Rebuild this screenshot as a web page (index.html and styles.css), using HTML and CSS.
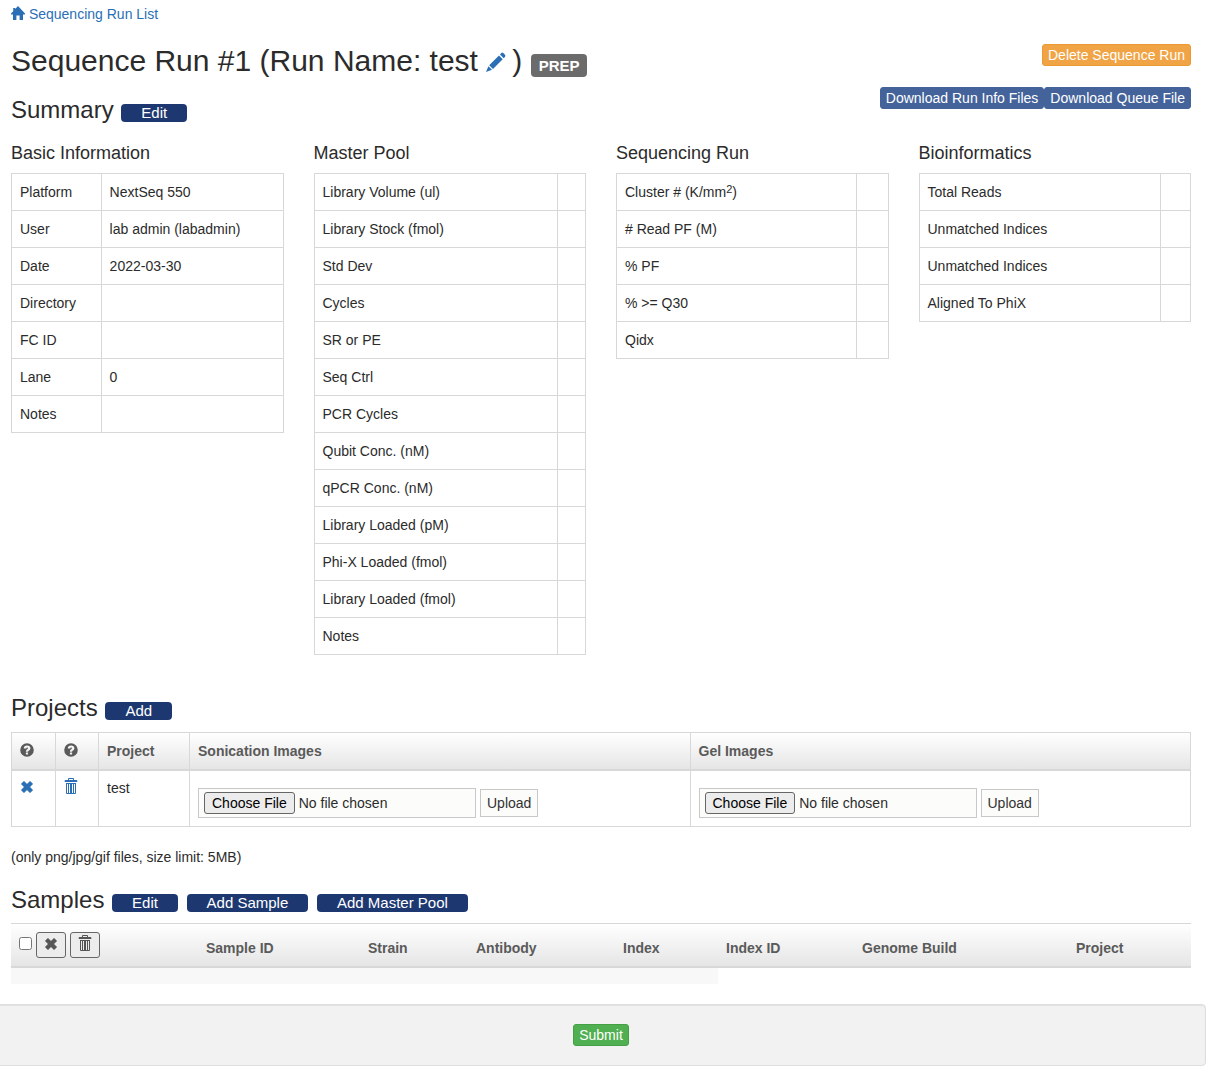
FILE: index.html
```html
<!DOCTYPE html>
<html lang="en">
<head>
<meta charset="utf-8">
<title>Sequence Run #1</title>
<link rel="stylesheet" href="styles.css">
</head>
<body>
<svg class="sprite" aria-hidden="true">
  <symbol id="home" viewBox="0 0 14 14"><path d="M7 0 L14 7.6 V8.4 H12 V14 H8.6 V9.4 H5.4 V14 H2 V8.4 H0 V7.6 L2.2 5.2 V2 H4.2 V3Z"/></symbol>
  <symbol id="pencil" viewBox="0 0 20 20"><path d="M15.2 1.2 Q16.2 0 17.3 1.1 L19 2.8 Q20 4 18.9 5 L17.7 6.2 L14 2.4Z M13 3.4 L16.7 7.2 L7 17 L3.2 13.2Z M2.4 14.2 L6 17.8 L0 20Z"/></symbol>
  <symbol id="question" viewBox="0 0 14 14"><path fill-rule="evenodd" d="M7 .2a6.8 6.8 0 1 0 0 13.6A6.8 6.8 0 0 0 7 .2Z M5.9 9.5h2.2v2H5.9Z M3.8 5.5C3.8 3.5 5 2.4 7.1 2.4c2 0 3.3 1 3.3 2.8 0 1.3-.7 1.8-1.4 2.3-.6.4-.9.6-.9 1.2H5.9c0-1.400.5-1.900 1.300-2.500.5-.4.9-.6.9-1.100 0-.4-.3-.7-.9-.7s-.9.4-.9 1.100Z"/></symbol>
  <symbol id="remove" viewBox="0 0 12 12"><path d="M2.900.3 6 3.300 9.100.3 11.700 2.900 8.700 6l3 3.100-2.600 2.600L6 8.700l-3.100 3L.3 9.100 3.300 6l-3-3.100Z" stroke="currentColor" stroke-width=".6"/></symbol>
  <symbol id="trash" viewBox="0 0 14 16"><path fill-rule="evenodd" d="M4 2V1Q4 0 5 0h4q1 0 1 1v1h2.500q.8 0 .8.800V4H.7V2.800Q.7 2 1.500 2Z M5 2h4V1H5Z M2 5h10v10q0 1-1 1H3q-1 0-1-1Z M3 6v9h1V6Z M5 6v9h1V6Z M8 6v9h1V6Z M10 6v9h1V6Z"/></symbol>
</svg>

<nav><a href="#"><svg class="icon-home"><use href="#home"/></svg> Sequencing Run List</a></nav>

<header class="page-head">
  <div class="titles">
    <h1>Sequence Run #1 (Run Name: test <a href="#" aria-label="Edit run name"><svg class="icon-pencil"><use href="#pencil"/></svg></a>&thinsp;) <span class="status">PREP</span></h1>
    <h2>Summary <button class="action">Edit</button></h2>
  </div>
  <div class="tools">
    <button class="btn btn-warning">Delete Sequence Run</button>
    <div class="downloads"><button class="btn btn-download">Download Run Info Files</button><button class="btn btn-download">Download Queue File</button></div>
  </div>
</header>

<main>
  <section class="summary">
    <div>
      <h3>Basic Information</h3>
      <table class="grid basic">
        <tr><td>Platform</td><td>NextSeq 550</td></tr>
        <tr><td>User</td><td>lab admin (labadmin)</td></tr>
        <tr><td>Date</td><td>2022-03-30</td></tr>
        <tr><td>Directory</td><td></td></tr>
        <tr><td>FC ID</td><td></td></tr>
        <tr><td>Lane</td><td>0</td></tr>
        <tr><td>Notes</td><td></td></tr>
      </table>
    </div>
    <div>
      <h3>Master Pool</h3>
      <table class="grid pool">
        <tr><td>Library Volume (ul)</td><td></td></tr>
        <tr><td>Library Stock (fmol)</td><td></td></tr>
        <tr><td>Std Dev</td><td></td></tr>
        <tr><td>Cycles</td><td></td></tr>
        <tr><td>SR or PE</td><td></td></tr>
        <tr><td>Seq Ctrl</td><td></td></tr>
        <tr><td>PCR Cycles</td><td></td></tr>
        <tr><td>Qubit Conc. (nM)</td><td></td></tr>
        <tr><td>qPCR Conc. (nM)</td><td></td></tr>
        <tr><td>Library Loaded (pM)</td><td></td></tr>
        <tr><td>Phi-X Loaded (fmol)</td><td></td></tr>
        <tr><td>Library Loaded (fmol)</td><td></td></tr>
        <tr><td>Notes</td><td></td></tr>
      </table>
    </div>
    <div>
      <h3>Sequencing Run</h3>
      <table class="grid run">
        <tr><td>Cluster # (K/mm<sup>2</sup>)</td><td></td></tr>
        <tr><td># Read PF (M)</td><td></td></tr>
        <tr><td>% PF</td><td></td></tr>
        <tr><td>% &gt;= Q30</td><td></td></tr>
        <tr><td>Qidx</td><td></td></tr>
      </table>
    </div>
    <div>
      <h3>Bioinformatics</h3>
      <table class="grid bio">
        <tr><td>Total Reads</td><td></td></tr>
        <tr><td>Unmatched Indices</td><td></td></tr>
        <tr><td>Unmatched Indices</td><td></td></tr>
        <tr><td>Aligned To PhiX</td><td></td></tr>
      </table>
    </div>
  </section>

  <section class="projects">
    <h2>Projects <button class="action">Add</button></h2>
    <table class="grid">
      <colgroup><col class="c-remove"><col class="c-delete"><col class="c-project"><col><col></colgroup>
      <thead>
        <tr><th><svg class="icon-question"><use href="#question"/></svg></th><th><svg class="icon-question"><use href="#question"/></svg></th><th>Project</th><th>Sonication Images</th><th>Gel Images</th></tr>
      </thead>
      <tbody>
        <tr>
          <td><a href="#" aria-label="Remove project"><svg class="icon-remove"><use href="#remove"/></svg></a></td>
          <td><a href="#" aria-label="Delete project"><svg class="icon-trash"><use href="#trash"/></svg></a></td>
          <td>test</td>
          <td><form class="upload"><input type="file" aria-label="Sonication image"><button type="button">Upload</button></form></td>
          <td><form class="upload"><input type="file" aria-label="Gel image"><button type="button">Upload</button></form></td>
        </tr>
      </tbody>
    </table>
    <p>(only png/jpg/gif files, size limit: 5MB)</p>
  </section>

  <section class="samples">
    <h2>Samples <button class="action">Edit</button> <button class="action">Add Sample</button> <button class="action">Add Master Pool</button></h2>
    <table>
      <colgroup><col class="s-select"><col class="s-id"><col class="s-strain"><col class="s-antibody"><col class="s-index"><col class="s-indexid"><col class="s-genome"><col class="s-project"></colgroup>
      <thead>
        <tr>
          <th><div class="select-tools"><input type="checkbox" aria-label="Select all samples"><button aria-label="Remove samples"><svg class="icon-remove"><use href="#remove"/></svg></button><button aria-label="Delete samples"><svg class="icon-trash"><use href="#trash"/></svg></button></div></th>
          <th>Sample ID</th><th>Strain</th><th>Antibody</th><th>Index</th><th>Index ID</th><th>Genome Build</th><th>Project</th>
        </tr>
      </thead>
      <tbody><tr><td colspan="5"></td></tr></tbody>
    </table>
  </section>
</main>

<footer><button class="btn btn-success">Submit</button></footer>
</body>
</html>
```
FILE: styles.css
```css
* { box-sizing: border-box; }
body {
  margin: 0;
  padding: 4px 28px 11px 11px;
  background: #fff;
  color: #2b2b2b;
  font: 14px/20px "Liberation Sans", Helvetica, Arial, sans-serif;
}
a { color: #2a6fb5; text-decoration: none; }
button, input { font: inherit; }
button { cursor: pointer; }
svg { fill: currentColor; }
.sprite { display: none; }
.icon-home { width: 14px; height: 14px; vertical-align: -1px; }
.icon-pencil { width: 20px; height: 20px; vertical-align: -1px; }
.icon-question { width: 14px; height: 14px; vertical-align: -1px; }
.icon-remove { width: 12px; height: 12px; margin: 0 1px; vertical-align: 0; }
.icon-trash { width: 14px; height: 16px; vertical-align: -1px; }

h1, h2, h3 { margin: 0; font-weight: 400; }
h1 { font-size: 30px; line-height: 33px; }
h2 { font-size: 24px; line-height: 26px; }
h3 { font-size: 18px; line-height: 20px; margin-bottom: 10px; }

nav { margin-bottom: 20px; }
.page-head { display: flex; justify-content: space-between; }
.titles { display: flex; flex-direction: column; gap: 20px; }
.tools { display: flex; flex-direction: column; align-items: flex-end; gap: 21px; }
.downloads { display: flex; }

.status {
  display: inline-block;
  padding: 0 8px;
  border-radius: 4px;
  background: #6b6b6b;
  color: #fff;
  font-size: 15px;
  font-weight: 700;
  line-height: 23px;
  vertical-align: 0;
}
.btn {
  padding: 0 5px;
  border: 1px solid;
  border-radius: 3px;
  color: #fff;
  line-height: 20px;
}
.btn-warning { background: #f0a445; border-color: #eb9a32; }
.btn-download { background: #44639b; border-color: #44639b; }
.btn-success { background: #50af50; border-color: #45a045; }
.action {
  height: 18px;
  margin-left: 1px;
  padding: 0 20px;
  border: 0;
  border-radius: 4px;
  background: #1d3870;
  color: #fff;
  font-size: 15px;
  line-height: 18px;
  vertical-align: 0;
}

.summary {
  display: grid;
  grid-template-columns: repeat(4, 1fr);
  gap: 30px;
  margin-top: 20px;
}
table { width: 100%; border-collapse: collapse; table-layout: fixed; }
td, th { padding: 8px; text-align: left; vertical-align: top; }
.grid td, .grid th { border: 1px solid #d8d8d8; }
.summary td { height: 37px; }
.basic td:first-child { width: 33%; }
.pool td:last-child { width: 28px; }
.run td:last-child { width: 32px; }
.bio td:last-child { width: 30px; }
sup { font-size: 11px; line-height: 0; vertical-align: 4px; }

thead { background: linear-gradient(#fff, #e4e4e4); color: #5a5a5a; }
.projects { margin-top: 40px; }
.projects table { margin-top: 11px; }
.projects thead th { border-bottom-width: 2px; }
.projects tbody td { padding-top: 7px; }
.c-remove { width: 44px; }
.c-delete { width: 43px; }
.c-project { width: 91px; }
.upload { display: flex; align-items: center; gap: 4px; margin-top: 10px; }
.upload input {
  width: 278px;
  height: 30px;
  padding: 3px 5px;
  border: 1px solid #c8c8c8;
  background: #fcfcfa;
  line-height: 20px;
}
.upload input::file-selector-button {
  height: 22px;
  margin: 0 4px 0 0;
  padding: 0 7px;
  border: 1px solid #666;
  border-radius: 3px;
  background: #ececec;
  color: #000;
  font: inherit;
}
.upload button {
  height: 28px;
  padding: 0 6px;
  border: 1px solid #c8c8c8;
  background: #fcfcfa;
  color: #333;
}
.projects p { margin: 20px 0; }

.samples table { margin-top: 10px; }
.samples th {
  border-top: 1px solid #d8d8d8;
  border-bottom: 2px solid #d8d8d8;
  vertical-align: bottom;
}
.samples td { background: #f8f8f8; }
.samples .action { margin-right: 1px; }
.s-select { width: 187px; }
.s-id { width: 162px; }
.s-strain { width: 108px; }
.s-antibody { width: 147px; }
.s-index { width: 103px; }
.s-indexid { width: 136px; }
.s-genome { width: 214px; }
.s-project { width: 123px; }
.select-tools { display: flex; align-items: flex-start; gap: 4px; }
.select-tools input { width: 13px; height: 13px; margin: 5px 0 0; }
.select-tools button {
  width: 30px;
  height: 26px;
  padding: 0;
  border: 1px solid #666;
  border-radius: 3px;
  background: #ececec;
  color: #555;
}

footer {
  margin: 20px -15px 0;
  padding: 19px;
  border: 1px solid #dedede;
  border-radius: 4px;
  background: #f2f2f2;
  box-shadow: inset 0 1px 1px #e2e2e2;
  text-align: center;
}
```
